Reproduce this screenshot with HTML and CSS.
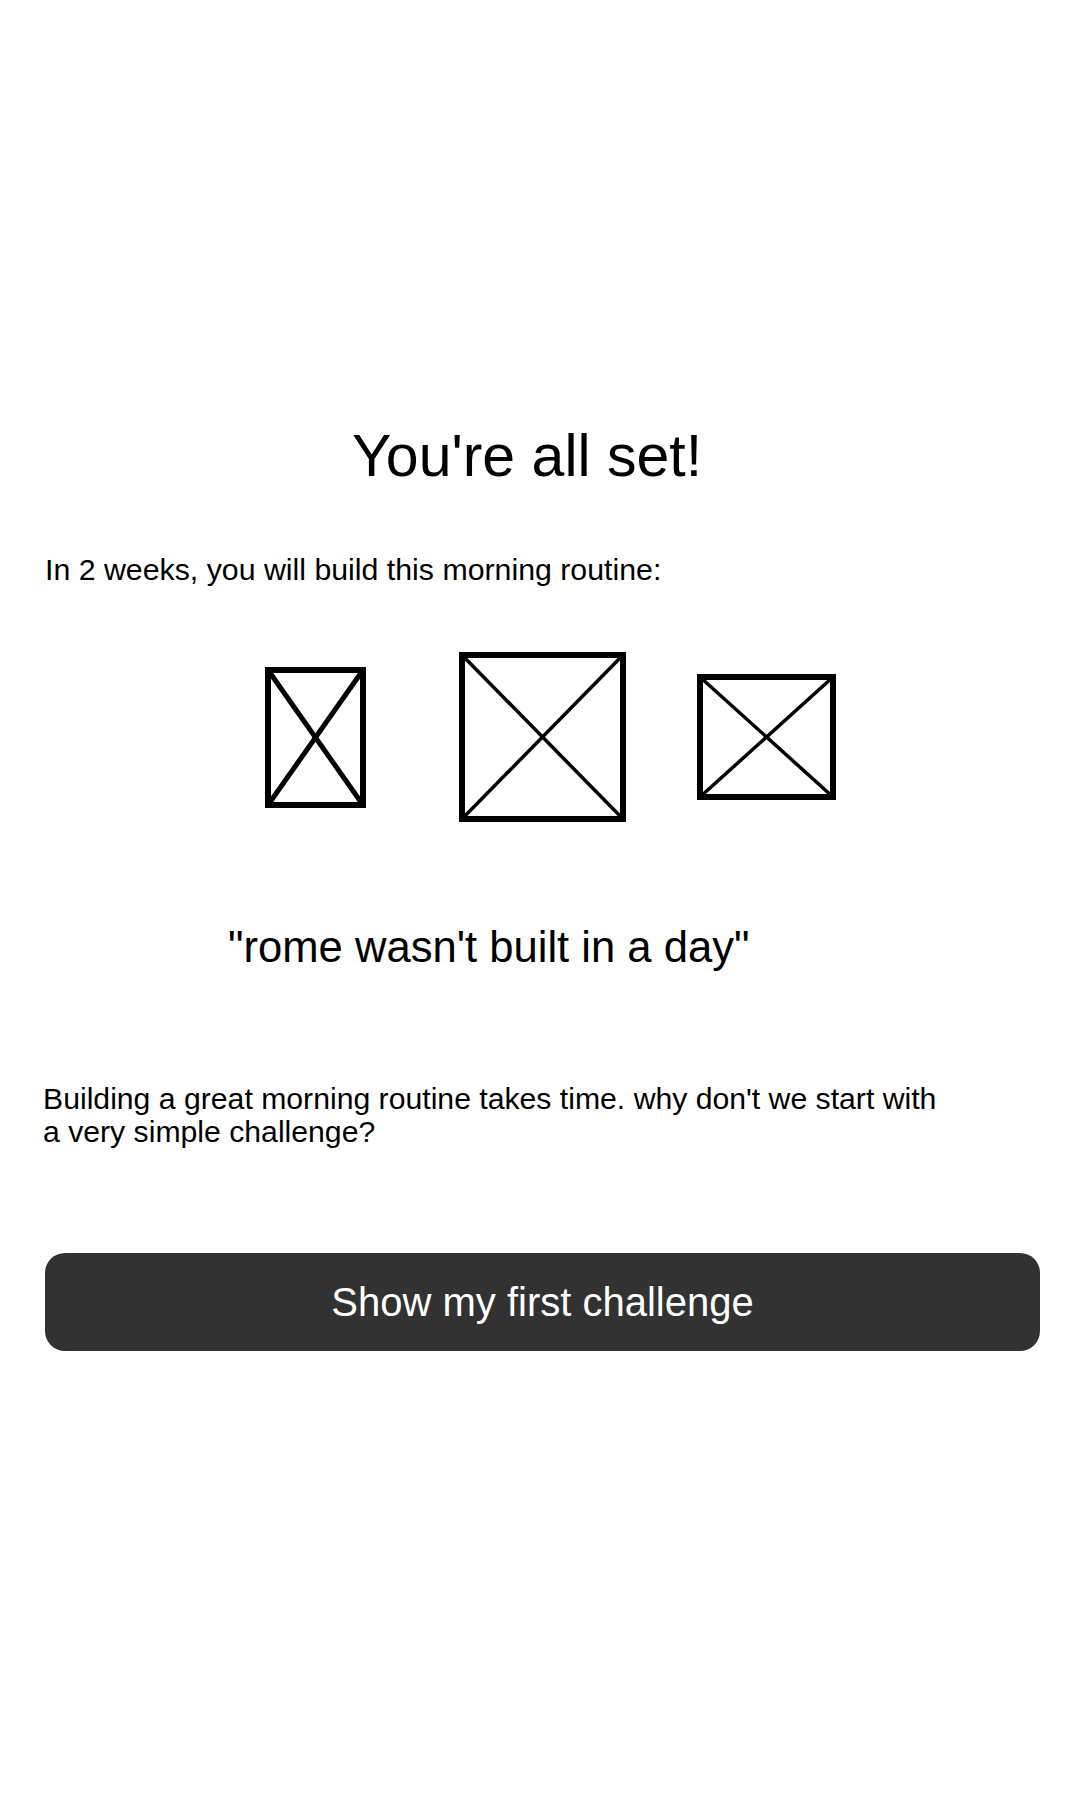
FILE: index.html
```html
<!DOCTYPE html>
<html lang="en">
<head>
<meta charset="utf-8">
<title>You're all set!</title>
<link rel="stylesheet" href="styles.css">
</head>
<body>
<main class="screen">
  <h1 class="title">You're all set!</h1>
  <p class="intro">In 2 weeks, you will build this morning routine:</p>
  <div class="routine">
    <svg class="ph ph-1" width="101" height="141" viewBox="0 0 101 141" aria-hidden="true">
      <rect x="3" y="3" width="95" height="135" fill="none" stroke="#000" stroke-width="6"/>
      <line x1="3" y1="3" x2="98" y2="138" stroke="#000" stroke-width="5"/>
      <line x1="98" y1="3" x2="3" y2="138" stroke="#000" stroke-width="5"/>
    </svg>
    <svg class="ph ph-2" width="167" height="170" viewBox="0 0 167 170" aria-hidden="true">
      <rect x="3" y="3" width="161" height="164" fill="none" stroke="#000" stroke-width="6"/>
      <line x1="3" y1="3" x2="164" y2="167" stroke="#000" stroke-width="3.5"/>
      <line x1="164" y1="3" x2="3" y2="167" stroke="#000" stroke-width="3.5"/>
    </svg>
    <svg class="ph ph-3" width="139" height="126" viewBox="0 0 139 126" aria-hidden="true">
      <rect x="3" y="3" width="133" height="120" fill="none" stroke="#000" stroke-width="6"/>
      <line x1="3" y1="3" x2="136" y2="123" stroke="#000" stroke-width="3.5"/>
      <line x1="136" y1="3" x2="3" y2="123" stroke="#000" stroke-width="3.5"/>
    </svg>
  </div>
  <p class="quote">"rome wasn't built in a day"</p>
  <p class="pitch">Building a great morning routine takes time. why don't we start with<br>a very simple challenge?</p>
  <button class="cta" type="button">Show my first challenge</button>
</main>
</body>
</html>
```

FILE: styles.css
```css
html, body {
  margin: 0;
  padding: 0;
  background: #fff;
}

body {
  font-family: "Liberation Sans", Arial, sans-serif;
  color: #000;
}

.screen {
  display: flex;
  flex-direction: column;
  align-items: stretch;
  padding: 424px 40px 0 45px;
  min-height: 1800px;
  box-sizing: border-box;
}

.title {
  margin: 0;
  padding-right: 31px;
  font-size: 59px;
  line-height: 64px;
  font-weight: 400;
  text-align: center;
}

.intro {
  margin: 65px 0 0 0;
  font-size: 30.3px;
  line-height: 34px;
}

.routine {
  margin: 65px 0 0 220px;
  display: flex;
  align-items: center;
  height: 170px;
}

.ph {
  display: block;
  flex: none;
}

.ph-2 {
  margin-left: 93px;
}

.ph-3 {
  margin-left: 71px;
}

.quote {
  margin: 101px 0 0 183px;
  font-size: 43.6px;
  line-height: 48px;
}

.pitch {
  margin: 111px 0 0 -2px;
  font-size: 30.2px;
  line-height: 33px;
}

.cta {
  margin: 105px 0 0 0;
  height: 98px;
  border: 0;
  border-radius: 20px;
  background: #323232;
  color: #fff;
  font-family: "Liberation Sans", Arial, sans-serif;
  font-size: 40px;
  text-align: center;
  padding: 0;
}
```
